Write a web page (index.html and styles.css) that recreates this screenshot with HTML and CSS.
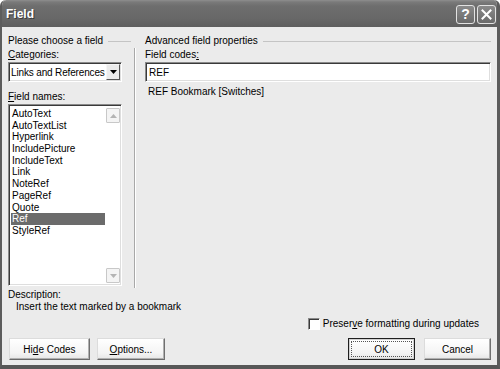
FILE: index.html
```html
<!DOCTYPE html>
<html>
<head>
<meta charset="utf-8">
<link rel="stylesheet" href="styles.css">
</head>
<body>
<div class="window">
  <div class="titlebar">
    <span class="title">Field</span>
    <div class="tbtns">
      <span class="tbtn help">?</span>
      <span class="tbtn close"><svg width="11" height="11" viewBox="0 0 11 11"><path d="M1.5 1.5 L9.5 9.5 M9.5 1.5 L1.5 9.5" stroke="#fff" stroke-width="2" stroke-linecap="square"/></svg></span>
    </div>
  </div>
  <div class="client">
    <div class="main">
      <div class="left">
        <div class="group"><span>Please choose a field</span><i class="rule"></i></div>
        <div class="label"><u>C</u>ategories:</div>
        <div class="combo sunken">
          <span class="combo-text">Links and References</span>
          <span class="drop"><svg width="7" height="4" viewBox="0 0 7 4"><path d="M0 0 H7 L3.5 4 Z" fill="#000"/></svg></span>
        </div>
        <div class="label gap"><u>F</u>ield names:</div>
        <div class="list sunken">
          <ul class="items">
            <li>AutoText</li>
            <li>AutoTextList</li>
            <li>Hyperlink</li>
            <li>IncludePicture</li>
            <li>IncludeText</li>
            <li>Link</li>
            <li>NoteRef</li>
            <li>PageRef</li>
            <li>Quote</li>
            <li class="sel">Ref</li>
            <li>StyleRef</li>
          </ul>
          <div class="scroll">
            <span class="arrow"><svg width="7" height="4" viewBox="0 0 7 4"><path d="M0 4 H7 L3.5 0 Z" fill="#b4b4b4"/></svg></span>
            <span class="arrow"><svg width="7" height="4" viewBox="0 0 7 4"><path d="M0 0 H7 L3.5 4 Z" fill="#b4b4b4"/></svg></span>
          </div>
        </div>
      </div>
      <div class="vsep"></div>
      <div class="right">
        <div class="group"><span>Advanced field properties</span><i class="rule"></i></div>
        <div class="label">Field codes<u>:</u></div>
        <div class="input sunken">REF</div>
        <div class="syntax">REF Bookmark [Switches]</div>
      </div>
    </div>
    <div class="desc">
      <div>Description:</div>
      <div class="desc-text">Insert the text marked by a bookmark</div>
    </div>
    <div class="option">
      <span class="check"></span>
      <span>Preser<u>v</u>e formatting during updates</span>
    </div>
    <div class="buttons">
      <span class="btn w-hide">Hi<u>d</u>e Codes</span>
      <span class="btn w-opt"><u>O</u>ptions...</span>
      <span class="spacer"></span>
      <span class="btn w-ok default"><span class="focus">OK</span></span>
      <span class="btn w-cancel">Cancel</span>
    </div>
  </div>
</div>
</body>
</html>
```

FILE: styles.css
```css
* { box-sizing: border-box; }
html, body { margin: 0; padding: 0; background: #ffffff; }
body {
  font-family: "Liberation Sans", Arial, sans-serif;
  font-size: 10px;
  line-height: 13px;
  color: #000;
}
u { text-decoration: underline; text-underline-offset: 1px; }

.window {
  width: 500px;
  height: 369px;
  display: flex;
  flex-direction: column;
  background: #ebebeb;
  border-left: 2px solid #5c5c5c;
  border-right: 3px solid #5c5c5c;
  border-bottom: 4px solid #575757;
  border-radius: 6px 6px 0 0;
  overflow: hidden;
}

.titlebar {
  height: 27px;
  flex: none;
  display: flex;
  align-items: center;
  padding: 0 4px 0 5px;
  margin: 0 -3px 0 -2px;
  background: linear-gradient(#8e8e8e 0, #7a7a7a 2px, #6e6e6e 6px, #686868 18px, #5e5e5e 27px);
  border-radius: 6px 6px 0 0;
}
.title {
  font-weight: bold;
  font-size: 12px;
  color: #fff;
  text-shadow: 1px 1px 0 #3c3c3c;
  padding-top: 1px;
  padding-left: 1px;
}
.tbtns { margin-left: auto; display: flex; gap: 2px; padding-top: 1px; }
.tbtn {
  width: 19px;
  height: 19px;
  border: 1px solid #e2e2e2;
  border-radius: 3px;
  background: linear-gradient(#8a8a8a, #6a6a6a);
  color: #fff;
  font-weight: bold;
  font-size: 14px;
  display: flex;
  align-items: center;
  justify-content: center;
}

.client {
  flex: 1;
  display: flex;
  flex-direction: column;
  padding: 7px 6px 0 6px;
}

.main { display: flex; }
.left { width: 123px; display: flex; flex-direction: column; }
.vsep {
  width: 2px;
  margin-left: 3px;
  margin-top: 14px;
  height: 240px;
  border-left: 1px solid #a8a8a8;
  border-right: 1px solid #ffffff;
}
.right { flex: 1; margin-left: 9px; display: flex; flex-direction: column; }

.group { display: flex; align-items: center; height: 13px; }
.group .rule {
  flex: 1;
  height: 1px;
  background: #c4c4c4;
  margin-left: 5px;
  margin-top: 1px;
}
.label { margin-top: 1px; height: 13px; }
.label.gap { margin-top: 8px; }

.sunken {
  border: 1px solid;
  border-color: #8a8a8a #ffffff #ffffff #8a8a8a;
  box-shadow: inset 1px 1px 0 #3a3a3a, inset -1px -1px 0 #dedede;
  background: #fff;
}

.combo {
  width: 114px;
  height: 20px;
  margin-top: 1px;
  display: flex;
  align-items: center;
  padding: 0 1px 0 2px;
}
.combo-text { flex: 1; white-space: nowrap; letter-spacing: -0.15px; }
.drop {
  width: 14px;
  height: 16px;
  flex: none;
  background: #ebebeb;
  border: 1px solid;
  border-color: #f6f6f6 #555 #555 #f6f6f6;
  display: flex;
  align-items: center;
  justify-content: center;
}

.list {
  width: 114px;
  height: 182px;
  margin-top: 1px;
  display: flex;
  padding: 3px 1px 2px 2px;
}
.items {
  list-style: none;
  margin: 0;
  padding: 0;
  width: 97px;
}
.items li {
  line-height: 11.7px;
  height: 11.7px;
  padding-left: 1px;
  white-space: nowrap;
}
.items li.sel { background: #6b6b6b; color: #fff; }
.scroll {
  flex: 1;
  margin-left: 1px;
  display: flex;
  flex-direction: column;
  justify-content: space-between;
}
.arrow {
  width: 14px;
  height: 15px;
  border: 1px solid #c8c8c8;
  border-radius: 1px;
  background: #f4f4f4;
  display: flex;
  align-items: center;
  justify-content: center;
}

.input {
  height: 20px;
  margin-top: 1px;
  padding: 3px 0 0 3px;
}
.syntax { margin-top: 3px; padding-left: 3px; }

.desc { margin-top: 1px; line-height: 12px; }
.desc-text { padding-left: 8px; }

.option {
  margin-top: 4px;
  height: 13px;
  display: flex;
  align-items: center;
  justify-content: flex-end;
  padding-right: 12px;
  gap: 3px;
}
.check {
  width: 12px;
  height: 12px;
  background: #fff;
  border: 1px solid;
  border-color: #8a8a8a #fff #fff #8a8a8a;
  box-shadow: inset 1px 1px 0 #3a3a3a;
}

.buttons {
  margin-top: 8px;
  display: flex;
  gap: 7px;
  padding-left: 1px;
}
.spacer { flex: 1; }
.btn {
  height: 22px;
  display: flex;
  align-items: center;
  justify-content: center;
  background: linear-gradient(#ffffff, #f4f4f4 70%, #e6e6e6);
  border: 1px solid;
  border-color: #dcdcdc #707070 #6a6a6a #dcdcdc;
  box-shadow: inset -1px -1px 0 #b0b0b0;
}
.w-hide { width: 81px; }
.w-opt { width: 68px; }
.w-ok { width: 67px; margin-right: 2px; }
.w-cancel { width: 67px; }
.btn.default { border: 1px solid #1e1e1e; box-shadow: inset 0 0 0 1px #d0d0d0; padding: 2px; }
.focus {
  flex: 1;
  align-self: stretch;
  display: flex;
  align-items: center;
  justify-content: center;
  border: 1px dotted #555;
}
```
